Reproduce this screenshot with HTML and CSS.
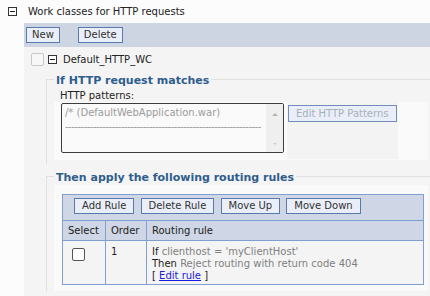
FILE: index.html
```html
<!DOCTYPE html>
<html lang="en">
<head>
    <meta charset="UTF-8">
    <title>Work classes for HTTP requests</title>
    <link rel="stylesheet" href="styles.css">
</head>
<body>
    <div class="section-head">
        <span class="toggle"></span>
        <span>Work classes for HTTP requests</span>
    </div>
    <div class="panel">
        <div class="toolbar">
            <button class="btn">New</button>
            <button class="btn">Delete</button>
        </div>
        <div class="panel-body">
            <div class="item-row">
                <span class="check faint"></span>
                <span class="toggle"></span>
                <span>Default_HTTP_WC</span>
            </div>
            <div class="group first">
                <div class="legend">If HTTP request matches</div>
                <div class="field-label">HTTP patterns:</div>
                <div class="white-box match-box">
                    <div class="patterns">
                        <div class="patterns-text">
                            <div>/* (DefaultWebApplication.war)</div>
                            <div class="dashes">---------------------------------------------------------------</div>
                        </div>
                        <div class="scroll">
                            <span class="arrow up"></span>
                            <span class="arrow down"></span>
                        </div>
                    </div>
                    <div class="btn-cell">
                        <button class="btn" disabled>Edit HTTP Patterns</button>
                    </div>
                </div>
            </div>
            <div class="group second">
                <div class="legend">Then apply the following routing rules</div>
                <div class="white-box rules-box">
                    <table class="rules">
                        <tr class="rules-toolbar">
                            <td colspan="3">
                                <button class="btn">Add Rule</button>
                                <button class="btn">Delete Rule</button>
                                <button class="btn">Move Up</button>
                                <button class="btn">Move Down</button>
                            </td>
                        </tr>
                        <tr class="rules-head">
                            <th class="col-select">Select</th>
                            <th class="col-order">Order</th>
                            <th>Routing rule</th>
                        </tr>
                        <tr class="rules-row">
                            <td class="col-select"><span class="check"></span></td>
                            <td class="col-order">1</td>
                            <td>
                                If <span class="muted">clienthost = 'myClientHost'</span><br>
                                Then <span class="muted">Reject routing with return code 404</span><br>
                                [ <a href="#">Edit rule</a> ]
                            </td>
                        </tr>
                    </table>
                </div>
            </div>
        </div>
    </div>
</body>
</html>
```

FILE: styles.css
```css
body {
    margin: 0;
    background: #fcfcfc;
    font-family: "DejaVu Sans", Verdana, sans-serif;
    font-size: 10px;
    color: #222;
}
.section-head {
    display: flex;
    align-items: center;
    height: 23px;
    padding-left: 8px;
}
.section-head .toggle {
    margin-right: 11px;
}
.toggle {
    display: inline-block;
    position: relative;
    width: 7px;
    height: 7px;
    border: 1px solid #333;
    background: #fff;
}
.toggle::after {
    content: "";
    position: absolute;
    left: 1px;
    right: 1px;
    top: 3px;
    height: 1px;
    background: #222;
}
.panel {
    margin-left: 24px;
    background: #f4f4f4;
}
.toolbar {
    background: #cdd5e3;
    height: 24px;
    display: flex;
    align-items: center;
    gap: 18px;
    padding-left: 2px;
}
.btn {
    font-family: inherit;
    font-size: 10px;
    color: #333;
    background: #e9eef8;
    border: 1px solid #5a7aad;
    padding: 1px 7px;
    height: 16px;
    line-height: 12px;
}
.toolbar .btn {
    padding: 1px 5px;
}
.btn:disabled {
    color: #a8b0bc;
    border-color: #6f8db8;
}
.panel-body {
    padding-bottom: 8px;
}
.item-row {
    display: flex;
    align-items: center;
    height: 25px;
    padding-left: 7px;
}
.check {
    display: inline-block;
    width: 11px;
    height: 11px;
    border: 1px solid #555;
    border-radius: 2px;
    background: #fff;
}
.check.faint {
    border-color: #c8c8c8;
    background: #f7f7f7;
    margin-right: 4px;
}
.item-row .toggle {
    margin-right: 6px;
}
.group {
    margin-left: 22px;
    border-left: 1px solid #e0e0e0;
    border-top: 1px solid #e0e0e0;
}
.group.first {
    margin-top: 7px;
    padding-bottom: 4px;
}
.group.second {
    margin-top: 12px;
}
.legend {
    display: table;
    margin: -8px 0 0 7px;
    padding: 3px 2px 0;
    height: 11px;
    line-height: 11px;
    background: #f4f4f4;
    font-size: 11px;
    font-weight: bold;
    color: #2f5d8d;
}
.field-label {
    padding: 4px 0 0 13px;
    height: 12px;
    line-height: 12px;
}
.white-box {
    margin: 0 2px 0 7px;
    background: #fafafa;
}
.match-box {
    display: flex;
    padding: 1px 0 7px 7px;
}
.patterns {
    display: flex;
    width: 221px;
    height: 48px;
    border: 1px solid #3c3c3c;
    border-radius: 2px;
    background: #fafafa;
}
.patterns-text {
    flex: 1;
    padding: 2px 0 0 3px;
    color: #9a9a9a;
    line-height: 14px;
    overflow: hidden;
    white-space: nowrap;
}
.dashes {
    letter-spacing: -0.5px;
}
.scroll {
    width: 17px;
    background: #efefef;
    display: flex;
    flex-direction: column;
    justify-content: space-between;
    align-items: center;
    padding: 9px 0 7px;
}
.arrow {
    width: 0;
    height: 0;
    border-left: 3px solid transparent;
    border-right: 3px solid transparent;
}
.arrow.up {
    border-bottom: 3px solid #b5b5b5;
}
.arrow.down {
    border-top: 2px solid #cfcfcf;
    border-left-width: 2px;
    border-right-width: 2px;
}
.btn-cell {
    background: #f3f3f3;
    margin: -1px 0 -6px 3px;
    width: 110px;
    padding: 3px 0 0 1px;
}
.btn-cell .btn {
    height: 17px;
}
.rules-box {
    padding: 9px 4px 6px 8px;
    margin-top: 2px;
}
.rules {
    width: 100%;
    border-collapse: collapse;
    border: 1px solid #7f9fd0;
    font-size: 10px;
}
.rules td, .rules th {
    border: 1px solid #7f9fd0;
    text-align: left;
    vertical-align: top;
}
.rules-toolbar td {
    background: #cfd7e6;
    height: 20px;
    padding: 3px 0 2px 11px;
    vertical-align: top;
}
.rules-toolbar .btn {
    margin-right: 3px;
}
.rules-head th {
    background: #cfd7e6;
    font-weight: normal;
    height: 19px;
    padding: 0 5px;
    vertical-align: middle;
}
.rules-row td {
    background: #f4f4f4;
    height: 44px;
    padding: 5px 5px 0;
    line-height: 12px;
    box-sizing: border-box;
}
.rules .col-select {
    width: 32px;
}
.rules .col-order {
    width: 30px;
}
.rules td.col-select {
    padding-left: 9px;
    padding-top: 7px;
}
.muted {
    color: #808080;
}
a {
    color: #1a1ae0;
}
```
